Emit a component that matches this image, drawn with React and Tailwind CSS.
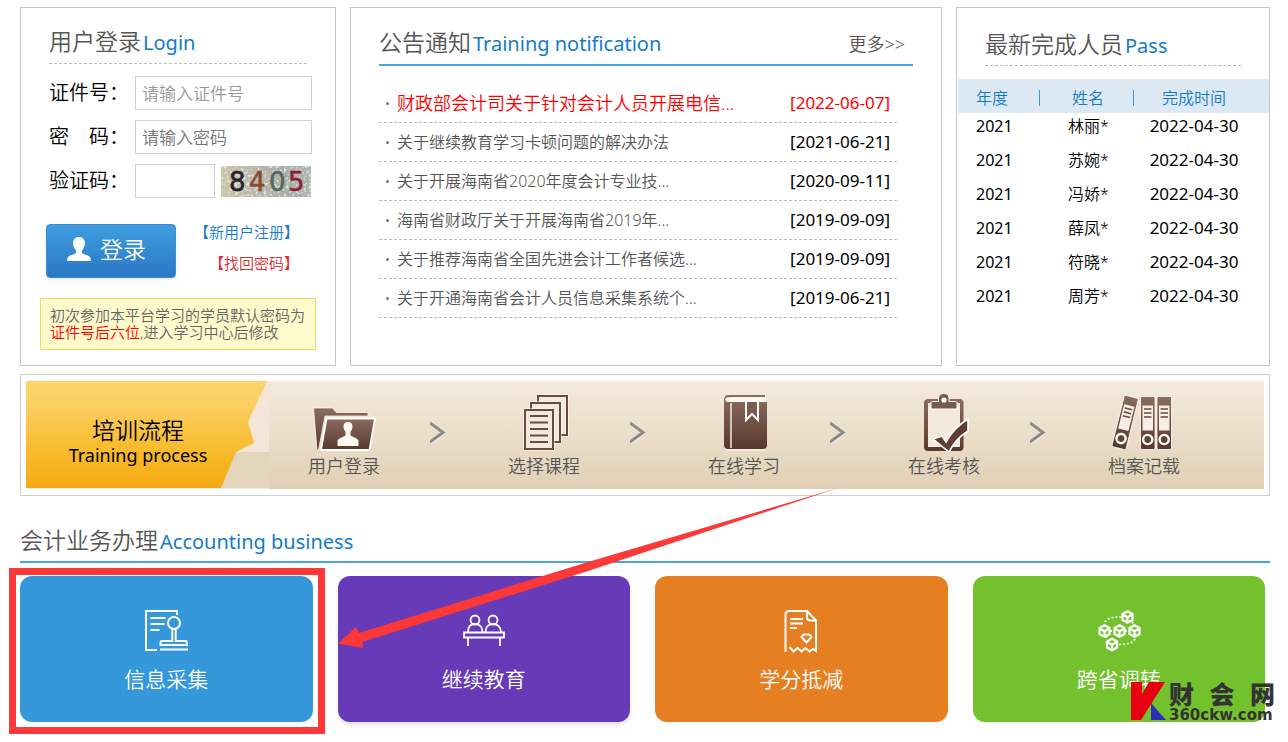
import React from 'react';

const notices = [
  { title: "财政部会计司关于针对会计人员开展电信...", date: "2022-06-07", hot: true },
  { title: "关于继续教育学习卡顿问题的解决办法", date: "2021-06-21" },
  { title: "关于开展海南省2020年度会计专业技...", date: "2020-09-11" },
  { title: "海南省财政厅关于开展海南省2019年...", date: "2019-09-09" },
  { title: "关于推荐海南省全国先进会计工作者候选...", date: "2019-09-09" },
  { title: "关于开通海南省会计人员信息采集系统个...", date: "2019-06-21" }
]

const passed = [
  { year: "2021", name: "林丽*", date: "2022-04-30" },
  { year: "2021", name: "苏婉*", date: "2022-04-30" },
  { year: "2021", name: "冯娇*", date: "2022-04-30" },
  { year: "2021", name: "薛凤*", date: "2022-04-30" },
  { year: "2021", name: "符晓*", date: "2022-04-30" },
  { year: "2021", name: "周芳*", date: "2022-04-30" }
]

const Title = ({ zh, en }) => (
  <h2 className="flex items-baseline gap-0.5 whitespace-nowrap leading-[30px]">
    <span className="text-[23px] text-[#555]">{zh}</span>
    <span className="text-[20px] font-normal text-[#147bc9]">{en}</span>
  </h2>
)

const Captcha = () => (
  <svg width="90" height="31" viewBox="0 0 90 31" role="img" aria-label="8405">
    <defs>
      <linearGradient id="capBg" x1="0" x2="1">
        <stop offset="0" stopColor="#c9c6a9" />
        <stop offset="0.35" stopColor="#bdb9ae" />
        <stop offset="0.7" stopColor="#a9ada9" />
        <stop offset="1" stopColor="#aeb8b0" />
      </linearGradient>
      <filter id="capNoise" x="0" y="0" width="100%" height="100%">
        <feTurbulence type="fractalNoise" baseFrequency="0.35" numOctaves="2" seed="8" />
        <feColorMatrix values="0 0 0 0 0.93  0 0 0 0 0.93  0 0 0 0 0.88  6 0 0 0 -3.2" />
      </filter>
    </defs>
    <rect width="90" height="31" fill="url(#capBg)" />
    <rect width="90" height="31" filter="url(#capNoise)" opacity="0.7" />
    <g fontFamily="DejaVu Sans, sans-serif" fontSize="26" fontWeight="normal" strokeWidth="0.6">
      <text x="8" y="25" fill="#2a2333" stroke="#2a2333">8</text>
      <text x="28" y="25" fill="#8a4a2e" stroke="#8a4a2e">4</text>
      <text x="48" y="25" fill="#56695c" stroke="#56695c">0</text>
      <text x="67" y="25" fill="#8c1f3a" stroke="#8c1f3a">5</text>
    </g>
  </svg>
)

const LoginPanel = () => (
  <section className="border border-[#c6c6c6] pb-[15px]">
    <div className="mx-7 flex h-14 items-end border-b border-dashed border-[#b8bec4] pb-[5px]">
      <Title zh="用户登录" en="Login" />
    </div>
    <form className="mt-3" onSubmit={e => e.preventDefault()}>
      <div className="ml-7 mr-[23px] flex flex-col gap-2.5">
        <div className="flex h-[34px] items-center">
          <label htmlFor="idNo" className="w-[86px] shrink-0 text-[20px] text-black">证件号：</label>
          <input id="idNo" placeholder="请输入证件号" className="h-full w-full min-w-0 border border-[#d3d3d3] px-1.5 text-[17px] placeholder:text-[#999]" />
        </div>
        <div className="flex h-[34px] items-center">
          <label htmlFor="pwd" className="w-[86px] shrink-0 text-[20px] text-black">密　码：</label>
          <input id="pwd" type="password" placeholder="请输入密码" className="h-full w-full min-w-0 border border-[#d3d3d3] px-1.5 text-[17px] placeholder:text-[#757575]" />
        </div>
        <div className="flex h-[34px] items-center">
          <label htmlFor="code" className="w-[86px] shrink-0 text-[20px] text-black">验证码：</label>
          <input id="code" className="mr-1.5 h-full w-20 border border-[#d3d3d3] px-1.5 text-[17px]" />
          <Captcha />
        </div>
      </div>
      <div className="ml-[25px] mt-[26px] flex justify-between pr-9">
        <button className="flex h-[54px] w-[130px] items-center justify-center gap-2 rounded border border-[#3a8fd0] bg-linear-to-b from-[#3f9ddf] to-[#2a78c4] pb-1 pr-2.5 text-[23px] text-white shadow-sm">
          <svg width="26" height="26" viewBox="0 0 26 26" fill="#fff">
            <path d="M13 1c-4 0-6.200 3-6 6.600.1 2.800 1.500 5.400 3 6.900.6 1.600-.1 2.900-1.700 3.500C4.800 19.300 1 19.600 1 25h24c0-5.400-3.800-5.700-7.300-7-1.600-.6-2.300-1.900-1.700-3.500 1.500-1.500 2.900-4.100 3-6.900C19.200 4 17 1 13 1z" />
          </svg>
          登录
        </button>
        <div className="flex flex-col items-end gap-[15px] text-[15px] leading-4">
          <a href="#register" className="text-[#147bc9]">【新用户注册】</a>
          <a href="#password" className="text-[#dd2b30]">【找回密码】</a>
        </div>
      </div>
    </form>
    <p className="mx-[19px] mt-5 whitespace-nowrap border border-[#e8dc5c] bg-[#fffacb] px-[9px] py-2 text-[15px] leading-[17px] text-[#666]">
      初次参加本平台学习的学员默认密码为<br />
      <span className="text-[#f00]">证件号后六位</span>,进入学习中心后修改
    </p>
  </section>
)

const NoticePanel = () => (
  <section className="border border-[#c6c6c6] px-7">
    <div className="flex h-[58px] items-end justify-between border-b-2 border-[#45a6e0] pb-[5px] pr-2">
      <Title zh="公告通知" en="Training notification" />
      <a href="#more" className="text-[18px] leading-[30px] text-[#555]">更多&gt;&gt;</a>
    </div>
    <ul className="mr-4 mt-[18px]">
      {notices.map(n => (
        <li key={n.title} className={n.hot ? "flex h-[39px] items-center border-b border-dashed border-[#b8bec4] text-[#f00]" : "flex h-[39px] items-center border-b border-dashed border-[#b8bec4] text-black"}>
          <span className="ml-[7px] mr-2 size-[3px] shrink-0 rounded-full bg-[#777]" />
          <a href="#notice" className={n.hot ? "grow truncate text-[18px]" : "grow truncate text-[16px] text-[#555]"}>{n.title}</a>
          <span className="mr-[7px] text-[17px] font-normal">[{n.date}]</span>
        </li>
      ))}
    </ul>
  </section>
)

const PassPanel = () => (
  <section className="border border-[#c6c6c6]">
    <div className="mx-7 flex h-[58px] items-end border-b border-dashed border-[#b8b8b8] pb-1">
      <Title zh="最新完成人员" en="Pass" />
    </div>
    <table className="ml-px mt-[13px] w-[calc(100%-1px)] table-fixed text-[16px]">
      <thead>
        <tr className="h-[34px] bg-[#dce8f2] text-[#147bc9]">
          <th className="w-[82px] p-0 pt-[3px] font-[350]">
            <div className="flex h-4 items-center border-r border-[#3f95d4] pl-[18px]">年度</div>
          </th>
          <th className="w-[94px] p-0 pt-[3px] font-[350]">
            <div className="flex h-4 items-center justify-center border-r border-[#3f95d4] pl-[3px]">姓名</div>
          </th>
          <th className="p-0 pr-[15px] pt-[3px] font-[350]">
            <div className="flex h-4 items-center justify-center">完成时间</div>
          </th>
        </tr>
      </thead>
      <tbody className="leading-[26px] text-black">
        {passed.map(p => (
          <tr key={p.name}>
            <td className="pb-2 pl-[18px] font-normal">{p.year}</td>
            <td className="pb-2 pl-[3px] text-center">{p.name}</td>
            <td className="pb-2 pr-[15px] text-center text-[17px] font-normal">{p.date}</td>
          </tr>
        ))}
      </tbody>
    </table>
  </section>
)

const FolderIcon = () => (
  <svg width="64" height="58" viewBox="0 0 64 58">
    <path d="M1.500 14h19l4 4.500H56V22H13L6.500 56H5z" fill="url(#brown)" stroke="#fbf6ef" strokeWidth="0.8" />
    <path d="M14.500 24.500H63L57.500 56H9z" fill="url(#brown)" stroke="#fff" strokeWidth="1.800" strokeLinejoin="round" />
    <path d="M36 28c-3 0-4.700 2-4.500 4.700.1 2.300 1 4 2 5v3.500c-2 2.200-8 2.500-8 6V52h21v-4.800c0-3.500-6-3.800-8-6v-3.500c1-1 1.900-2.700 2-5C40.700 30 39 28 36 28z" fill="#fdf8f2" />
  </svg>
)

const PapersIcon = () => (
  <svg width="64" height="58" viewBox="0 0 64 58" fill="#f3e9dc" stroke="#6d4a3e" strokeWidth="2">
    <path d="M26 2h29v39H26z" stroke="#fff" strokeWidth="3" />
    <path d="M26 2h29v39H26z" />
    <path d="M19 9h29v39H19z" stroke="#fff" strokeWidth="3" />
    <path d="M19 9h29v39H19z" />
    <path d="M13 16h28v39H13z" stroke="#fff" strokeWidth="3" />
    <path d="M13 16h28v39H13z" />
    <path d="M18 22h18M18 28.500h18M18 35h18M18 41.500h18M18 48h18" />
  </svg>
)

const BookIcon = () => (
  <svg width="64" height="58" viewBox="0 0 64 58">
    <path d="M16 1h37v2H18v5h37v43c0 2.500-1.500 4-4 4H16c-2.500 0-4-1.500-4-4V6c0-3 1.500-5 4-5z" fill="url(#brown)" />
    <path d="M16 3.200h38V8H16c-3.600 0-3.600-4.800 0-4.800z" fill="#fffaf4" />
    <path d="M19 9v45" stroke="#eee0d3" strokeWidth="1.600" />
    <path d="M34 7v19l6-6 6 6V7z" fill="#7d5b4e" stroke="#fff" strokeWidth="2" />
    <path d="M14 56h39" stroke="#fff" strokeWidth="1" />
  </svg>
)

const ClipboardIcon = () => (
  <svg width="64" height="58" viewBox="0 0 64 58">
    <path d="M16 5h32c2 0 3.500 1.200 3.500 3.500V53c0 2.500-1.500 4-3.500 4H16c-2.500 0-4-1.500-4-4V8.500C12 6.200 13.500 5 16 5z" fill="url(#brown)" />
    <path d="M16 9h32v44H16z" fill="#f3e9dd" />
    <path d="M19 15V9.500c0-1.300.7-2 2-2h5.500V4c0-3 2-4.500 5.500-4.500S37 1 37 4v3.500h6c1.300 0 2 .7 2 2V15z" fill="#7b5a4e" stroke="#fff" strokeWidth="1" />
    <circle cx="32" cy="6" r="2.600" fill="#fff" />
    <path d="M21 45l9-3 4 6c5-9 12-17 22-23v12c-8 5-15 13-19 21z" fill="#5f3f33" stroke="#fff" strokeWidth="1.600" />
  </svg>
)

const Binder = ({ transform }) => (
  <g transform={transform}>
    <rect x="0" y="0" width="14.500" height="53" rx="1.500" fill="url(#brown)" stroke="#fff" strokeWidth="0.8" />
    <rect x="2" y="9" width="10.500" height="25" fill="#f7efe6" />
    <path d="M3.500 12.500h7.500M3.500 16.500h7.500M3.500 20.500h7.500" stroke="#6d4a3e" strokeWidth="1.600" />
    <circle cx="7.200" cy="43" r="4.600" fill="none" stroke="#fff" strokeWidth="2.400" />
  </g>
)

const BindersIcon = () => (
  <svg width="64" height="58" viewBox="0 0 64 58">
    <Binder transform="translate(12.500 1) rotate(14)" />
    <Binder transform="translate(28.500 2.500)" />
    <Binder transform="translate(45 2.500)" />
  </svg>
)

const steps = [
  { text: "用户登录", Icon: FolderIcon },
  { text: "选择课程", Icon: PapersIcon },
  { text: "在线学习", Icon: BookIcon },
  { text: "在线考核", Icon: ClipboardIcon },
  { text: "档案记载", Icon: BindersIcon }
]

const Process = () => (
  <section className="mt-2 border border-[#cfcfcf] px-[5px] py-1.5">
    {/* gradient shared by the step icons */}
    <svg className="absolute" width="0" height="0" aria-hidden="true">
      <linearGradient id="brown" x1="0" y1="0" x2="0" y2="1">
        <stop offset="0" stopColor="#8d6c60" />
        <stop offset="1" stopColor="#57382c" />
      </linearGradient>
    </svg>
    <div className="flex h-[108px] bg-linear-to-b from-[#f4eadd] to-[#e1d0b5]">
      <div className="relative w-[244px] shrink-0">
        <svg className="absolute inset-0" width="244" height="108" viewBox="0 0 244 108">
          <linearGradient id="gold" x1="0" y1="0" x2="0" y2="1">
            <stop offset="0" stopColor="#fbd56a" />
            <stop offset="0.2" stopColor="#fad064" />
            <stop offset="0.6" stopColor="#f7bd31" />
            <stop offset="1" stopColor="#f6aa12" />
          </linearGradient>
          <path d="M240 0h3v72h-34l19-11-6-20z" fill="#f5e4d8" />
          <path d="M209 71h34v37h-48z" fill="#e4d6bd" />
          <path d="M0 0h241l-19 41 6 21-18 9-15 36H0z" fill="url(#gold)" />
          <path d="M0 107.500h243" stroke="#e9eef2" />
        </svg>
        <div className="relative flex h-full flex-col items-center justify-center pr-5 pt-[13px] text-black">
          <span className="text-[23px] leading-[26px]">培训流程</span>
          <span className="text-[18px] font-normal leading-6">Training process</span>
        </div>
      </div>
      <ol className="flex grow">
        {steps.map(({ text, Icon }, i) => (
          <li key={text} className={i < 4 ? "flex flex-1" : "flex w-[194px]"}>
            <div className="flex w-[148px] flex-col items-center pt-[13px]">
              <Icon />
              <a href="#step" className="text-[18px] leading-7 text-[#555]">{text}</a>
            </div>
            {i < 4 && (
              <svg className="ml-3 mt-10" width="16" height="24" viewBox="0 0 16 24" fill="none">
                <path d="M1 3l12 9.500L1 22" stroke="#fff" strokeWidth="3" opacity="0.6" />
                <path d="M0 2l13 9.500L0 21" stroke="#8c8a88" strokeWidth="3" />
              </svg>
            )}
          </li>
        ))}
      </ol>
    </div>
  </section>
)

const StampIcon = () => (
  <svg width="44" height="44" viewBox="0 0 44 44" fill="none" stroke="#fff" strokeWidth="2">
    <path d="M33 6V2H2v39h11M6.500 9h15M6.500 15h14M6.500 21h9" />
    <circle cx="30" cy="14" r="6" />
    <path d="M28.300 19.500v12.500H18c-1 0-1.500.8-1.500 2V36H43v-2c0-1.200-.5-2-1.500-2h-9.800V19.500M16 40.500h28" />
  </svg>
)

const ClassIcon = () => (
  <svg width="44" height="44" viewBox="0 0 44 44" fill="none" stroke="#fff" strokeWidth="1.800">
    <circle cx="13" cy="11" r="4.500" />
    <circle cx="31" cy="11" r="4.500" />
    <path d="M6 23c0-5 2.500-8 7-8s7.500 3 7.500 8M23.500 23c0-5 3-8 7.500-8s8 3 8 8M2 23.500h40v5H2zM6 28.500V37M38 28.500V37" />
  </svg>
)

const ReceiptIcon = () => (
  <svg width="44" height="44" viewBox="0 0 44 44" fill="none" stroke="#fff" strokeWidth="2">
    <path d="M6.500 43V5.500c0-2 1.300-3.500 3.500-3.500h18l9 9.500V42l-3-2-3.500 2.500-4-3.500-4 3.500-4-3.500-4 3.500-4-4.500" />
    <path d="M28 2v6c0 2.300 1.200 3.500 3.500 3.500H37M11 10h13M11 14.500h13M11 19h7" />
    <path d="M24.500 25.500h6l2 2.500-5 5.500-5-5.500z" strokeLinejoin="round" />
  </svg>
)

const cubes = [[30.5, 8], [7.500, 22], [22.500, 22], [37.500, 22], [15, 35.500]]

const CubesIcon = () => (
  <svg width="44" height="44" viewBox="0 0 44 44" fill="none" stroke="#fff" strokeWidth="2.200">
    {cubes.map(([x, y]) => (
      <path key={`${x}-${y}`} transform={`translate(${x} ${y})`} d="M0-5.800L5-3v6L0 5.800-5 3v-6zM-4-2L0 .3 4-2M0 .3V5" />
    ))}
    <path d="M8 13C11 9 16 7.500 24 8M38 30c-2 4-8 5.500-16 5.500M35 13l2 2M9 27l2 3M13 22h4M28 22h4" strokeDasharray="1.800 2.200" strokeWidth="1.800" />
  </svg>
)

const Mark = () => (
  <>
    <span className="pointer-events-none absolute -left-[11px] -right-3 -top-2 -bottom-3 border-[7px] border-[#fc3838]" />
    <svg className="pointer-events-none absolute left-[318px] -top-[88px] z-10 max-w-none" width="502" height="164" viewBox="0 0 502 164">
      <path d="M500 0L250 74 21 145 18 139 0 155.500 25 160 24 154 250 83z" fill="#fc3838" />
    </svg>
  </>
)

const Watermark = () => (
  <div className="pointer-events-none absolute -right-2.5 top-[106px] z-10 flex w-[144px] gap-[2px] text-[#333]">
    <svg width="36" height="38" viewBox="0 0 36 38" className="shrink-0">
      <path d="M0 0h11v12L18 0h16L10 38H0z" fill="#e60012" />
      <path d="M20 21l15 17H20z" fill="#2a2fb5" />
    </svg>
    <div className="w-[106px]">
      <div className="flex justify-between text-[25px] font-black leading-[24px]">
        <span>财</span><span>会</span><span>网</span>
      </div>
      <div className="font-['DejaVu_Sans'] text-[15px] font-bold leading-[18px]">360ckw.com</div>
    </div>
  </div>
)

const Tiles = () => (
  <ul className="mr-[5px] mt-[13px] grid grid-cols-4 gap-[25px]">
    <li className="relative">
      <a href="#collect" className="flex h-[146px] flex-col items-center rounded-xl bg-[#3498db] pt-[33px] text-[21px] text-white">
        <StampIcon />
        <span className="mt-[11px] leading-[30px]">信息采集</span>
      </a>
      <Mark />
    </li>
    <li>
      <a href="#education" className="flex h-[146px] flex-col items-center rounded-xl bg-[#673ab7] pt-[33px] text-[21px] text-white shadow-md">
        <ClassIcon />
        <span className="mt-[11px] leading-[30px]">继续教育</span>
      </a>
    </li>
    <li>
      <a href="#credit" className="flex h-[146px] flex-col items-center rounded-xl bg-[#e67e22] pt-[33px] text-[21px] text-white">
        <ReceiptIcon />
        <span className="mt-[11px] leading-[30px]">学分抵减</span>
      </a>
    </li>
    <li className="relative">
      <a href="#transfer" className="flex h-[146px] flex-col items-center rounded-xl bg-[#73c22d] pt-[33px] text-[21px] text-white">
        <CubesIcon />
        <span className="mt-[11px] leading-[30px]">跨省调转</span>
      </a>
      <Watermark />
    </li>
  </ul>
)

const App = () => {
  return (
    <main className="bg-white pb-5 pl-5 pr-[18px] pt-[7px] font-['Noto_Sans','Noto_Sans_CJK_SC',sans-serif] font-[350]">
      <div className="grid grid-cols-[316px_1fr_314px] gap-3.5">
        <LoginPanel />
        <NoticePanel />
        <PassPanel />
      </div>
      <Process />
      <section className="mt-[29px]">
        <div className="border-b-2 border-[#45a6e0] pb-1">
          <Title zh="会计业务办理" en="Accounting business" />
        </div>
        <Tiles />
      </section>
    </main>
  );
};


export default App;
